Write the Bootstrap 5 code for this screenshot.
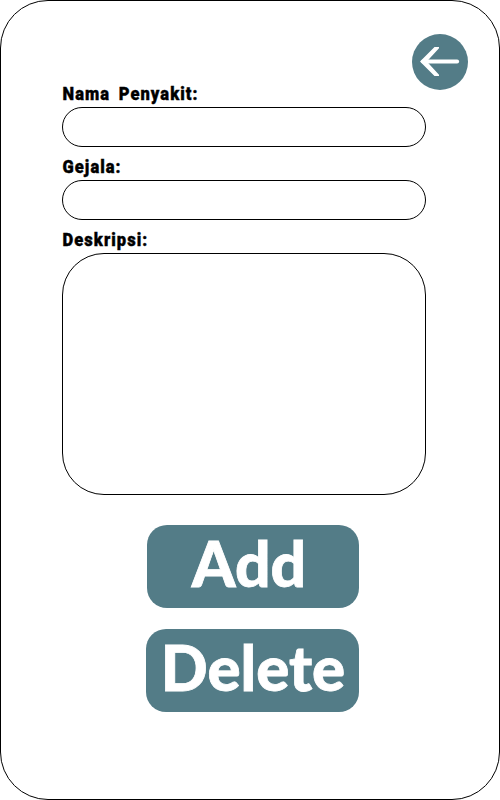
<!DOCTYPE html>
<html lang="id">
<head>
<meta charset="utf-8">
<meta name="viewport" content="width=device-width, initial-scale=1">
<title>Penyakit</title>
<link href="https://cdn.jsdelivr.net/npm/bootstrap@5.3.0/dist/css/bootstrap.min.css" rel="stylesheet">
<style>
body { background: #fff; }
.screen { width: 500px; height: 800px; border: 1px solid #000; border-radius: 48px; padding: 33px 31px 0 61px; }
.back-btn { width: 56px; height: 56px; margin-bottom: -7px; }
.fields { width: 364px; }
.field-label { height: 24px; font: 900 19px/22px Roboto, sans-serif; color: #000; white-space: nowrap; }
.field-label span { display: inline-block; transform-origin: 0 50%; word-spacing: 4px; letter-spacing: 1.2px; transform: translateX(.5px) scaleX(.87); -webkit-text-stroke: .4px #000; }
.field-box, .field-box:focus { height: 40px; border: 1px solid #000; border-radius: 20px; margin-bottom: 9px; box-shadow: none; }
.field-area, .field-area:focus { height: 242px; border: 1px solid #000; border-radius: 42px; resize: none; box-shadow: none; }
.actions { width: 213px; margin: 30px 0 0 84px; gap: 21px; }
.action-btn, .action-btn:hover { height: 83px; background: #537c87; color: #fff; border: 0; border-radius: 20px; font: 900 63px/75px Lato, sans-serif; white-space: nowrap; }
.action-btn span { display: block; height: 83px; -webkit-text-stroke: .8px #fff; transform: translateX(.5px) scaleX(.98); }
.add-btn { width: 212px; }
.action-btn.add-btn span { transform: translateX(-4px) scaleX(.99); }
</style>
<script src="https://cdn.jsdelivr.net/npm/bootstrap@5.3.0/dist/js/bootstrap.bundle.min.js"></script>
</head>
<body>
<main class="screen d-flex flex-column overflow-hidden">
  <button class="btn back-btn p-0 border-0 rounded-circle align-self-end flex-shrink-0 d-flex" aria-label="Kembali">
    <svg width="56" height="56" viewBox="0 0 56 56"><circle cx="28" cy="28" r="28" fill="#537c87"/><path d="M11 27.5H45.2" fill="none" stroke="#fff" stroke-width="3.8" stroke-linecap="round"/><path d="M8 27.5L22.5 13H27V14.3L14.8 27.5L27 40.8V42H22.5Z" fill="#fff"/></svg>
  </button>
  <form class="fields">
    <label class="field-label d-block" for="nama"><span>Nama Penyakit:</span></label>
    <input class="form-control field-box" id="nama">
    <label class="field-label d-block" for="gejala"><span>Gejala:</span></label>
    <input class="form-control field-box" id="gejala">
    <label class="field-label d-block" for="deskripsi"><span>Deskripsi:</span></label>
    <textarea class="form-control field-area" id="deskripsi"></textarea>
  </form>
  <div class="actions d-flex flex-column align-items-end">
    <button class="btn action-btn add-btn p-0"><span>Add</span></button>
    <button class="btn action-btn w-100 p-0"><span>Delete</span></button>
  </div>
</main>
</body>
</html>
